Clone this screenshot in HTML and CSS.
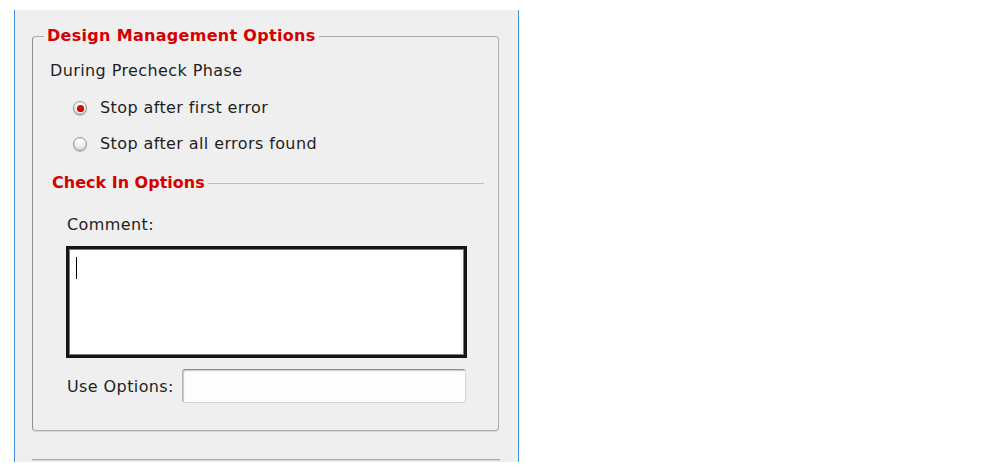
FILE: index.html
```html
<!DOCTYPE html>
<html>
<head>
<meta charset="utf-8">
<link rel="stylesheet" href="styles.css">
</head>
<body>
<div class="panel">
  <div class="group">
    <div class="group-title">Design Management Options</div>
    <div class="row phase">During Precheck Phase</div>
    <div class="row radio-row first"><span class="radio checked"></span><span>Stop after first error</span></div>
    <div class="row radio-row second"><span class="radio"></span><span>Stop after all errors found</span></div>
    <div class="row sub-title"><span class="sub-text">Check In Options</span><span class="sub-line"></span></div>
    <div class="row comment-label">Comment:</div>
    <div class="textarea"><span class="caret"></span></div>
    <div class="use-row"><span class="use-label">Use Options:</span><span class="input"></span></div>
  </div>
  <div class="separator"></div>
</div>
</body>
</html>
```
FILE: styles.css
```css
html, body { margin: 0; padding: 0; background: #ffffff; }
body { font-family: "DejaVu Sans", sans-serif; font-size: 16px; letter-spacing: 0.4px; color: #1e1e1e; }
.panel {
  margin: 10px 0 0 14px;
  width: 505px;
  height: 452px;
  border-left: 1px solid #3b8ee0;
  border-right: 1px solid #3b8ee0;
  background: #efefef;
  padding: 26px 0 0 17px;
  box-sizing: border-box;
  display: flex;
  flex-direction: column;
}
.group {
  width: 467px;
  height: 395px;
  box-sizing: border-box;
  border: 1px solid #ababab;
  border-left-color: #8e8e8e;
  border-radius: 4px;
  box-shadow: 0 1px 0 #d8d8d8;
  display: flex;
  flex-direction: column;
  align-items: flex-start;
}
.group-title {
  margin: -10px 0 0 11px;
  padding: 0 3px;
  background: #efefef;
  color: #d40000;
  font-weight: bold;
  letter-spacing: 0.3px;
  line-height: 18px;
}
.row { line-height: 20px; height: 20px; display: flex; align-items: center; }
.phase { margin: 16px 0 0 17px; }
.radio-row { margin-left: 40px; }
.radio-row.first { margin-top: 17px; }
.radio-row.second { margin-top: 16px; }
.radio {
  width: 14px; height: 14px;
  border-radius: 50%;
  box-sizing: border-box;
  border: 1px solid #939393;
  background: radial-gradient(circle at 50% 30%, #ffffff 0%, #f4f4f4 40%, #c8c8c8 100%);
  box-shadow: 0 1px 1px rgba(0,0,0,0.2);
  margin-right: 13px;
  display: flex; align-items: center; justify-content: center;
}
.radio.checked::after {
  content: "";
  width: 7px; height: 7px; border-radius: 50%;
  background: radial-gradient(circle at 50% 35%, #f01010 0%, #c00000 60%, #900000 100%);
}
.sub-title { margin: 19px 0 0 19px; align-self: stretch; margin-right: 14px; }
.sub-text { color: #d40000; font-weight: bold; letter-spacing: 0; padding-right: 3px; }
.sub-line { flex: 1; height: 1px; background: #bdbdbd; }
.comment-label { margin: 22px 0 0 34px; }
.textarea {
  margin: 11px 0 0 33px;
  width: 401px; height: 112px;
  box-sizing: border-box;
  background: #ffffff;
  border: 3px solid #151515;
  box-shadow: 0 0 0 1px #7a7a7a inset;
  padding: 8px 0 0 7px;
}
.caret { display: block; width: 1px; height: 22px; background: #000; }
.use-row { margin: 11px 0 0 34px; display: flex; align-items: center; }
.use-label { width: 115px; }
.input {
  width: 284px; height: 34px;
  box-sizing: border-box;
  background: #fdfdfd;
  border: 1px solid #d6d6d6;
  border-top-color: #8f8f8f;
  border-left-color: #b0b0b0;
  border-radius: 3px;
  box-shadow: inset 1px 1px 1px #c8c8c8;
}
.separator {
  margin: 28px 0 0 0;
  width: 468px;
  height: 1px;
  background: #a9a9a9;
  box-shadow: 0 1px 0 #dcdcdc;
}
```
